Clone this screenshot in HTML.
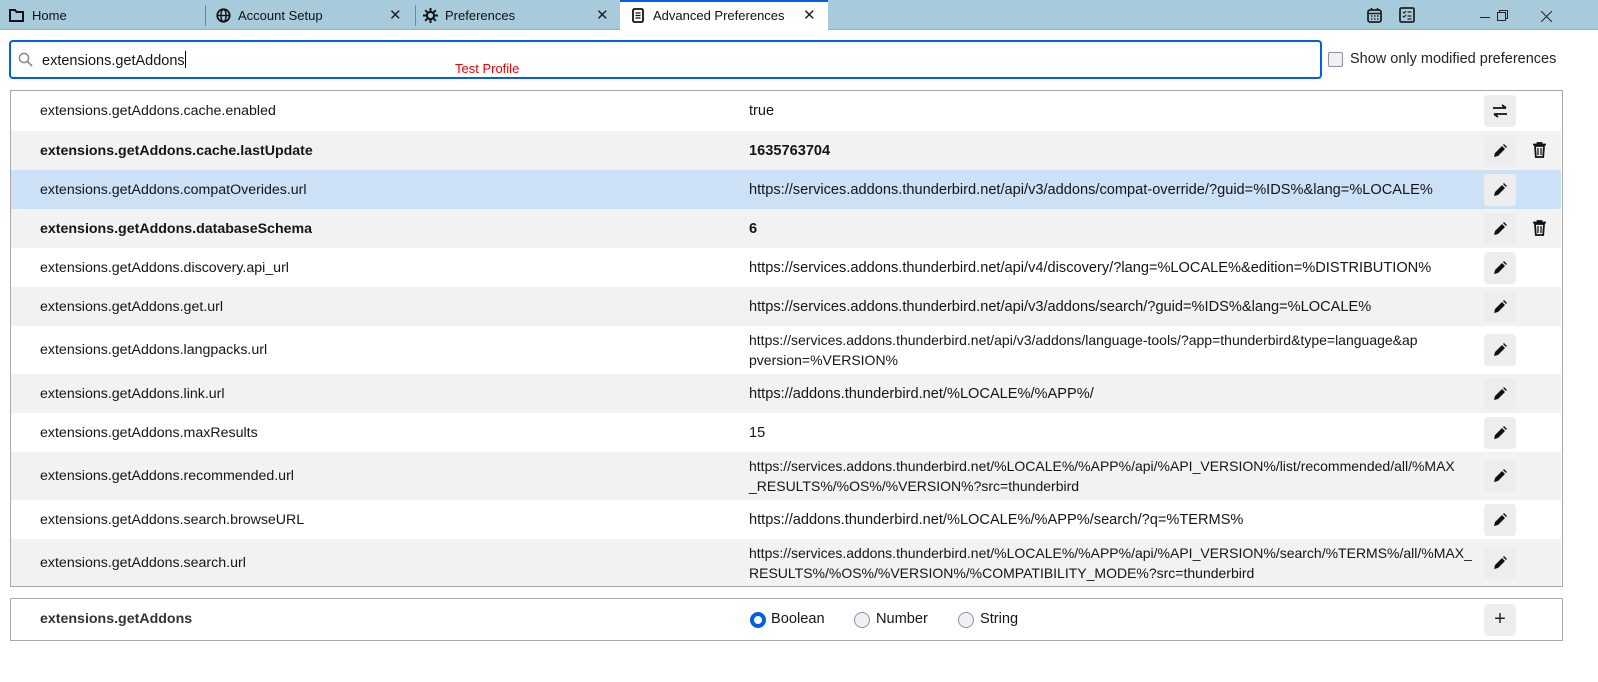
<!DOCTYPE html>
<html><head><meta charset="utf-8"><style>
*{margin:0;padding:0;box-sizing:border-box}
body{width:1598px;height:682px;background:#fff;font-family:"Liberation Sans",sans-serif;font-size:14.6px;color:#15141a;position:relative;overflow:hidden}
.tabbar{position:absolute;left:0;top:0;width:1598px;height:30px;background:#a8cbdc;border-bottom:1px solid #8fb0c0}
.tab{position:absolute;top:0;height:30px;line-height:31px;font-size:13px;color:#111}
.sep{position:absolute;top:5px;width:1px;height:21px;background:#6c8896}
.x{position:absolute;top:0;font-size:15px;line-height:31px;color:#222}
.active{position:absolute;left:620px;top:0;width:208px;height:31px;background:#fff;border-top:2px solid #0060df}
.search{position:absolute;left:9px;top:40px;width:1313px;height:39px;border:2px solid #0060df;border-radius:4px}
.row{position:absolute;left:11px;width:1550px;white-space:nowrap}
.row .n{position:absolute;left:29px;font-size:14.2px}
.row .v{position:absolute;left:738px;line-height:20px}
.row .v.w{font-size:14px}
.btn{position:absolute;left:1473px;width:32px;height:32px;background:#ededf0;border-radius:4px;z-index:2}
.del{position:absolute;left:1522px}
.b{font-weight:bold}
.g{background:#f2f2f2}
.sel{background:#cce0f6}
</style></head><body>
<div class="tabbar">
 <svg style="position:absolute;left:9px;top:9px" width="15" height="13" viewBox="0 0 15 13"><path d="M1 1h5l1.5 2H14v9H1z" fill="none" stroke="#111" stroke-width="2"/></svg>
 <div class="tab" style="left:32px">Home</div>
 <div class="sep" style="left:205px"></div>
 <svg style="position:absolute;left:216px;top:8px" width="15" height="15" viewBox="0 0 15 15"><circle cx="7.5" cy="7.5" r="6.2" fill="none" stroke="#111" stroke-width="1.8"/><ellipse cx="7.5" cy="7.5" rx="2.6" ry="6.2" fill="none" stroke="#111" stroke-width="1.4"/><path d="M1.5 7.5h12" stroke="#111" stroke-width="1.4"/></svg>
 <div class="tab" style="left:238px">Account Setup</div>
 <div class="x" style="left:389px">✕</div>
 <div class="sep" style="left:415px"></div>
 <svg style="position:absolute;left:423px;top:8px" width="15" height="15" viewBox="0 0 15 15"><circle cx="7.5" cy="7.5" r="3.6" fill="none" stroke="#111" stroke-width="2"/><path d="M7.5 0v3M7.5 12v3M0 7.5h3M12 7.5h3M2.2 2.2l2.1 2.1M10.7 10.7l2.1 2.1M2.2 12.8l2.1-2.1M10.7 4.3l2.1-2.1" stroke="#111" stroke-width="2"/></svg>
 <div class="tab" style="left:445px">Preferences</div>
 <div class="x" style="left:596px">✕</div>
 <div class="active"></div>
 <svg style="position:absolute;left:632px;top:8px" width="12" height="15" viewBox="0 0 12 15"><rect x="1" y="1" width="10" height="13" rx="1.5" fill="none" stroke="#111" stroke-width="1.8"/><path d="M3.5 5h5M3.5 7.5h5M3.5 10h5" stroke="#111" stroke-width="1.3"/></svg>
 <div class="tab" style="left:653px">Advanced Preferences</div>
 <div class="x" style="left:803px">✕</div>
 <svg style="position:absolute;left:1367px;top:7px" width="15" height="16" viewBox="0 0 15 16"><rect x="1" y="3" width="13" height="12" rx="2" fill="none" stroke="#222" stroke-width="1.8"/><path d="M1 6.5h13M4.5 1v3M10.5 1v3" stroke="#222" stroke-width="1.6"/><path d="M4 9h1.5M7 9h1.5M10 9h1.5M4 12h1.5M7 12h1.5M10 12h1.5" stroke="#222" stroke-width="1.4"/></svg>
 <svg style="position:absolute;left:1399px;top:7px" width="16" height="16" viewBox="0 0 16 16"><rect x="1" y="1" width="14" height="14" rx="1.5" fill="none" stroke="#222" stroke-width="1.8"/><path d="M4 5l1 1 2-2M8.5 5h4M4 9l1 1 2-2M8.5 9h4M8.5 12h4" stroke="#222" stroke-width="1.2" fill="none"/></svg>
 <div style="position:absolute;left:1480px;top:17px;width:10px;height:1px;background:#222"></div>
 <svg style="position:absolute;left:1497px;top:10px" width="11" height="11" viewBox="0 0 11 11"><rect x="0.5" y="2.5" width="8" height="8" fill="none" stroke="#222"/><path d="M2.5 2.5V.5h8v8h-2" fill="none" stroke="#222"/></svg>
 <svg style="position:absolute;left:1541px;top:11px" width="11" height="11" viewBox="0 0 11 11"><path d="M0 0l11 11M11 0L0 11" stroke="#222" stroke-width="1"/></svg>
</div>
<div class="search">
 <svg style="position:absolute;left:7px;top:10px" width="15" height="15" viewBox="0 0 15 15"><circle cx="6" cy="6" r="4.6" fill="none" stroke="#888" stroke-width="1.5"/><path d="M9.5 9.5l4.5 4.5" stroke="#888" stroke-width="1.6"/></svg>
 <div style="position:absolute;left:31px;top:9px;font-size:14.5px">extensions.getAddons<span style="display:inline-block;width:1px;height:17px;background:#000;vertical-align:-3px"></span></div>
 <div style="position:absolute;left:444px;top:19px;color:#e00;font-size:13px">Test Profile</div>
</div>
<div style="position:absolute;left:1328px;top:52px;width:15px;height:15px;border:1px solid #8f8f9d;border-radius:2px;background:#f0f0f4"></div>
<div style="position:absolute;left:1350px;top:51px;font-size:14.5px;color:#222">Show only modified preferences</div>

<div style="position:absolute;left:10px;top:90px;width:1553px;height:497px;border:1px solid #a8a8a8"></div>

<div class="row" style="top:91px;height:40px"><span class="n" style="top:12px">extensions.getAddons.cache.enabled</span><span class="v" style="top:10px">true</span>
<div class="btn" style="top:4px"><svg style="position:absolute;left:8px;top:9px" width="16" height="14" viewBox="0 0 16 14"><path d="M1 4h13M10 1l4 3M15 10H2M6 13l-4-3" stroke="#111" stroke-width="1.8" fill="none"/></svg></div></div>

<div class="row g" style="top:131px;height:39px"><span class="n b" style="top:12px">extensions.getAddons.cache.lastUpdate</span><span class="v b" style="top:10px">1635763704</span>
<div class="btn" style="top:4px"><svg style="position:absolute;left:9px;top:9px" width="14" height="14" viewBox="0 0 14 14"><path d="M1 13l1-4 7-7 3 3-7 7z M10 1l1-1 3 3-1 1z" fill="#111"/></svg></div>
<svg class="del" style="top:11px" width="13" height="16" viewBox="0 0 13 16"><path d="M0 2.5h13M4.5 2.5V1h4v1.5M2 4h9l-.8 11H2.8z" fill="none" stroke="#111" stroke-width="1.8"/><path d="M5 6v7M8 6v7" stroke="#111" stroke-width="1.3"/></svg></div>

<div class="row sel" style="top:170px;height:39px"><span class="n" style="top:12px">extensions.getAddons.compatOverides.url</span><span class="v" style="top:10px">https://services.addons.thunderbird.net/api/v3/addons/compat-override/?guid=%IDS%&amp;lang=%LOCALE%</span>
<div class="btn" style="top:4px"><svg style="position:absolute;left:9px;top:9px" width="14" height="14" viewBox="0 0 14 14"><path d="M1 13l1-4 7-7 3 3-7 7z M10 1l1-1 3 3-1 1z" fill="#111"/></svg></div></div>

<div class="row g" style="top:209px;height:39px"><span class="n b" style="top:12px">extensions.getAddons.databaseSchema</span><span class="v b" style="top:10px">6</span>
<div class="btn" style="top:4px"><svg style="position:absolute;left:9px;top:9px" width="14" height="14" viewBox="0 0 14 14"><path d="M1 13l1-4 7-7 3 3-7 7z M10 1l1-1 3 3-1 1z" fill="#111"/></svg></div>
<svg class="del" style="top:11px" width="13" height="16" viewBox="0 0 13 16"><path d="M0 2.5h13M4.5 2.5V1h4v1.5M2 4h9l-.8 11H2.8z" fill="none" stroke="#111" stroke-width="1.8"/><path d="M5 6v7M8 6v7" stroke="#111" stroke-width="1.3"/></svg></div>

<div class="row" style="top:248px;height:39px"><span class="n" style="top:12px">extensions.getAddons.discovery.api_url</span><span class="v" style="top:10px">https://services.addons.thunderbird.net/api/v4/discovery/?lang=%LOCALE%&amp;edition=%DISTRIBUTION%</span>
<div class="btn" style="top:4px"><svg style="position:absolute;left:9px;top:9px" width="14" height="14" viewBox="0 0 14 14"><path d="M1 13l1-4 7-7 3 3-7 7z M10 1l1-1 3 3-1 1z" fill="#111"/></svg></div></div>

<div class="row g" style="top:287px;height:39px"><span class="n" style="top:12px">extensions.getAddons.get.url</span><span class="v" style="top:10px">https://services.addons.thunderbird.net/api/v3/addons/search/?guid=%IDS%&amp;lang=%LOCALE%</span>
<div class="btn" style="top:4px"><svg style="position:absolute;left:9px;top:9px" width="14" height="14" viewBox="0 0 14 14"><path d="M1 13l1-4 7-7 3 3-7 7z M10 1l1-1 3 3-1 1z" fill="#111"/></svg></div></div>

<div class="row" style="top:326px;height:48px"><span class="n" style="top:16px">extensions.getAddons.langpacks.url</span><span class="v w" style="top:4px">https://services.addons.thunderbird.net/api/v3/addons/language-tools/?app=thunderbird&amp;type=language&amp;ap<br>pversion=%VERSION%</span>
<div class="btn" style="top:8px"><svg style="position:absolute;left:9px;top:9px" width="14" height="14" viewBox="0 0 14 14"><path d="M1 13l1-4 7-7 3 3-7 7z M10 1l1-1 3 3-1 1z" fill="#111"/></svg></div></div>

<div class="row g" style="top:374px;height:39px"><span class="n" style="top:12px">extensions.getAddons.link.url</span><span class="v" style="top:10px">https://addons.thunderbird.net/%LOCALE%/%APP%/</span>
<div class="btn" style="top:4px"><svg style="position:absolute;left:9px;top:9px" width="14" height="14" viewBox="0 0 14 14"><path d="M1 13l1-4 7-7 3 3-7 7z M10 1l1-1 3 3-1 1z" fill="#111"/></svg></div></div>

<div class="row" style="top:413px;height:39px"><span class="n" style="top:12px">extensions.getAddons.maxResults</span><span class="v" style="top:10px">15</span>
<div class="btn" style="top:4px"><svg style="position:absolute;left:9px;top:9px" width="14" height="14" viewBox="0 0 14 14"><path d="M1 13l1-4 7-7 3 3-7 7z M10 1l1-1 3 3-1 1z" fill="#111"/></svg></div></div>

<div class="row g" style="top:452px;height:48px"><span class="n" style="top:16px">extensions.getAddons.recommended.url</span><span class="v w" style="top:4px">https://services.addons.thunderbird.net/%LOCALE%/%APP%/api/%API_VERSION%/list/recommended/all/%MAX<br>_RESULTS%/%OS%/%VERSION%?src=thunderbird</span>
<div class="btn" style="top:8px"><svg style="position:absolute;left:9px;top:9px" width="14" height="14" viewBox="0 0 14 14"><path d="M1 13l1-4 7-7 3 3-7 7z M10 1l1-1 3 3-1 1z" fill="#111"/></svg></div></div>

<div class="row" style="top:500px;height:39px"><span class="n" style="top:12px">extensions.getAddons.search.browseURL</span><span class="v" style="top:10px">https://addons.thunderbird.net/%LOCALE%/%APP%/search/?q=%TERMS%</span>
<div class="btn" style="top:4px"><svg style="position:absolute;left:9px;top:9px" width="14" height="14" viewBox="0 0 14 14"><path d="M1 13l1-4 7-7 3 3-7 7z M10 1l1-1 3 3-1 1z" fill="#111"/></svg></div></div>

<div class="row g" style="top:539px;height:47px"><span class="n" style="top:16px">extensions.getAddons.search.url</span><span class="v w" style="top:4px">https://services.addons.thunderbird.net/%LOCALE%/%APP%/api/%API_VERSION%/search/%TERMS%/all/%MAX_<br>RESULTS%/%OS%/%VERSION%/%COMPATIBILITY_MODE%?src=thunderbird</span>
<div class="btn" style="top:8px"><svg style="position:absolute;left:9px;top:9px" width="14" height="14" viewBox="0 0 14 14"><path d="M1 13l1-4 7-7 3 3-7 7z M10 1l1-1 3 3-1 1z" fill="#111"/></svg></div></div>

<div style="position:absolute;left:10px;top:598px;width:1553px;height:43px;border:1px solid #a8a8a8">
 <span class="b" style="position:absolute;left:29px;top:12px;color:#333;font-size:14.2px">extensions.getAddons</span>
 <div style="position:absolute;left:739px;top:13px;width:16px;height:16px;border-radius:50%;border:4px solid #0060df"></div>
 <span style="position:absolute;left:760px;top:12px">Boolean</span>
 <div style="position:absolute;left:843px;top:13px;width:16px;height:16px;border-radius:50%;border:1px solid #8f8f9d;background:#f0f0f4"></div>
 <span style="position:absolute;left:865px;top:12px">Number</span>
 <div style="position:absolute;left:947px;top:13px;width:16px;height:16px;border-radius:50%;border:1px solid #8f8f9d;background:#f0f0f4"></div>
 <span style="position:absolute;left:969px;top:12px">String</span>
 <div class="btn" style="left:1473px;top:5px;text-align:center;line-height:31px;font-size:20px;color:#222">+</div>
</div>
</body></html>
